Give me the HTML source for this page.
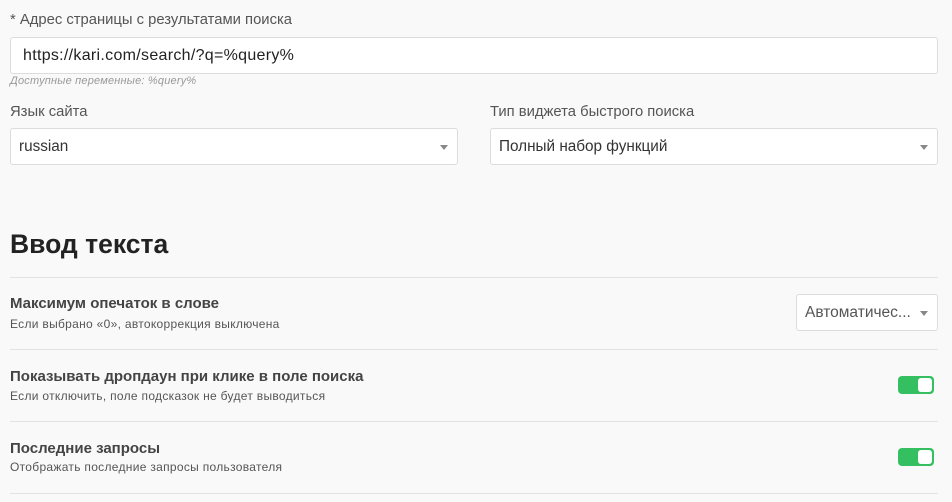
<!DOCTYPE html>
<html><head><meta charset="utf-8"><style>
*{box-sizing:border-box;margin:0;padding:0}
body{width:952px;height:502px;background:#f9f9f9;font-family:"Liberation Sans","Noto Sans CJK SC",sans-serif;color:#333;position:relative;overflow:hidden}
.a{position:absolute;white-space:nowrap}
.lbl{font-size:14.8px;color:#555}
.box{position:absolute;background:#fff;border:1px solid #dcdcdf;border-radius:3px}
.box span{position:absolute;left:8px;top:50%;transform:translateY(-50%);font-size:15.3px;color:#333}
.car{position:absolute;right:9px;top:50%;margin-top:-2px;border-left:4px solid transparent;border-right:4px solid transparent;border-top:5px solid #888}
.line{position:absolute;left:10px;width:928px;height:1px;background:#e2e2e2}
.t{font-size:15px;font-weight:bold;color:#444}
.s{font-size:12px;color:#555;letter-spacing:0.3px}
.tg{position:absolute;left:898px;width:36px;height:18px;background:#34c060;border-radius:4px}
.tg i{position:absolute;right:2px;top:2px;width:14px;height:14px;background:#fff;border-radius:3px}
</style></head><body>
<div class="a lbl" style="left:10px;top:12px">* Адрес страницы с результатами поиска</div>
<div class="box" style="left:10px;top:37px;width:928px;height:37px"><span style="left:12px;color:#222;font-size:16px;letter-spacing:0.3px">https://kari.com/search/?q=%query%</span></div>
<div class="a" style="left:10px;top:75px;font-size:11px;font-style:italic;color:#999;letter-spacing:0.2px">Доступные переменные: %query%</div>
<div class="a lbl" style="left:10px;top:104px">Язык сайта</div>
<div class="a lbl" style="left:490px;top:104px">Тип виджета быстрого поиска</div>
<div class="box" style="left:10px;top:128px;width:448px;height:37px"><span>russian</span><b class="car"></b></div>
<div class="box" style="left:490px;top:128px;width:448px;height:37px"><span>Полный набор функций</span><b class="car"></b></div>
<div class="a" style="left:10px;top:229px;font-size:26.5px;font-weight:bold;color:#222">Ввод текста</div>
<div class="line" style="top:277px"></div>
<div class="a t" style="left:10px;top:295px">Максимум опечаток в слове</div>
<div class="a s" style="left:10px;top:317px">Если выбрано «0», автокоррекция выключена</div>
<div class="box" style="left:796px;top:294px;width:142px;height:37px"><span style="font-size:15.5px;color:#555">Автоматичес...</span><b class="car"></b></div>
<div class="line" style="top:349px"></div>
<div class="a t" style="left:10px;top:368px">Показывать дропдаун при клике в поле поиска</div>
<div class="a s" style="left:10px;top:389px">Если отключить, поле подсказок не будет выводиться</div>
<div class="tg" style="top:376px"><i></i></div>
<div class="line" style="top:421px"></div>
<div class="a t" style="left:10px;top:440px">Последние запросы</div>
<div class="a s" style="left:10px;top:460px">Отображать последние запросы пользователя</div>
<div class="tg" style="top:448px"><i></i></div>
<div class="line" style="top:493px"></div>
</body></html>
